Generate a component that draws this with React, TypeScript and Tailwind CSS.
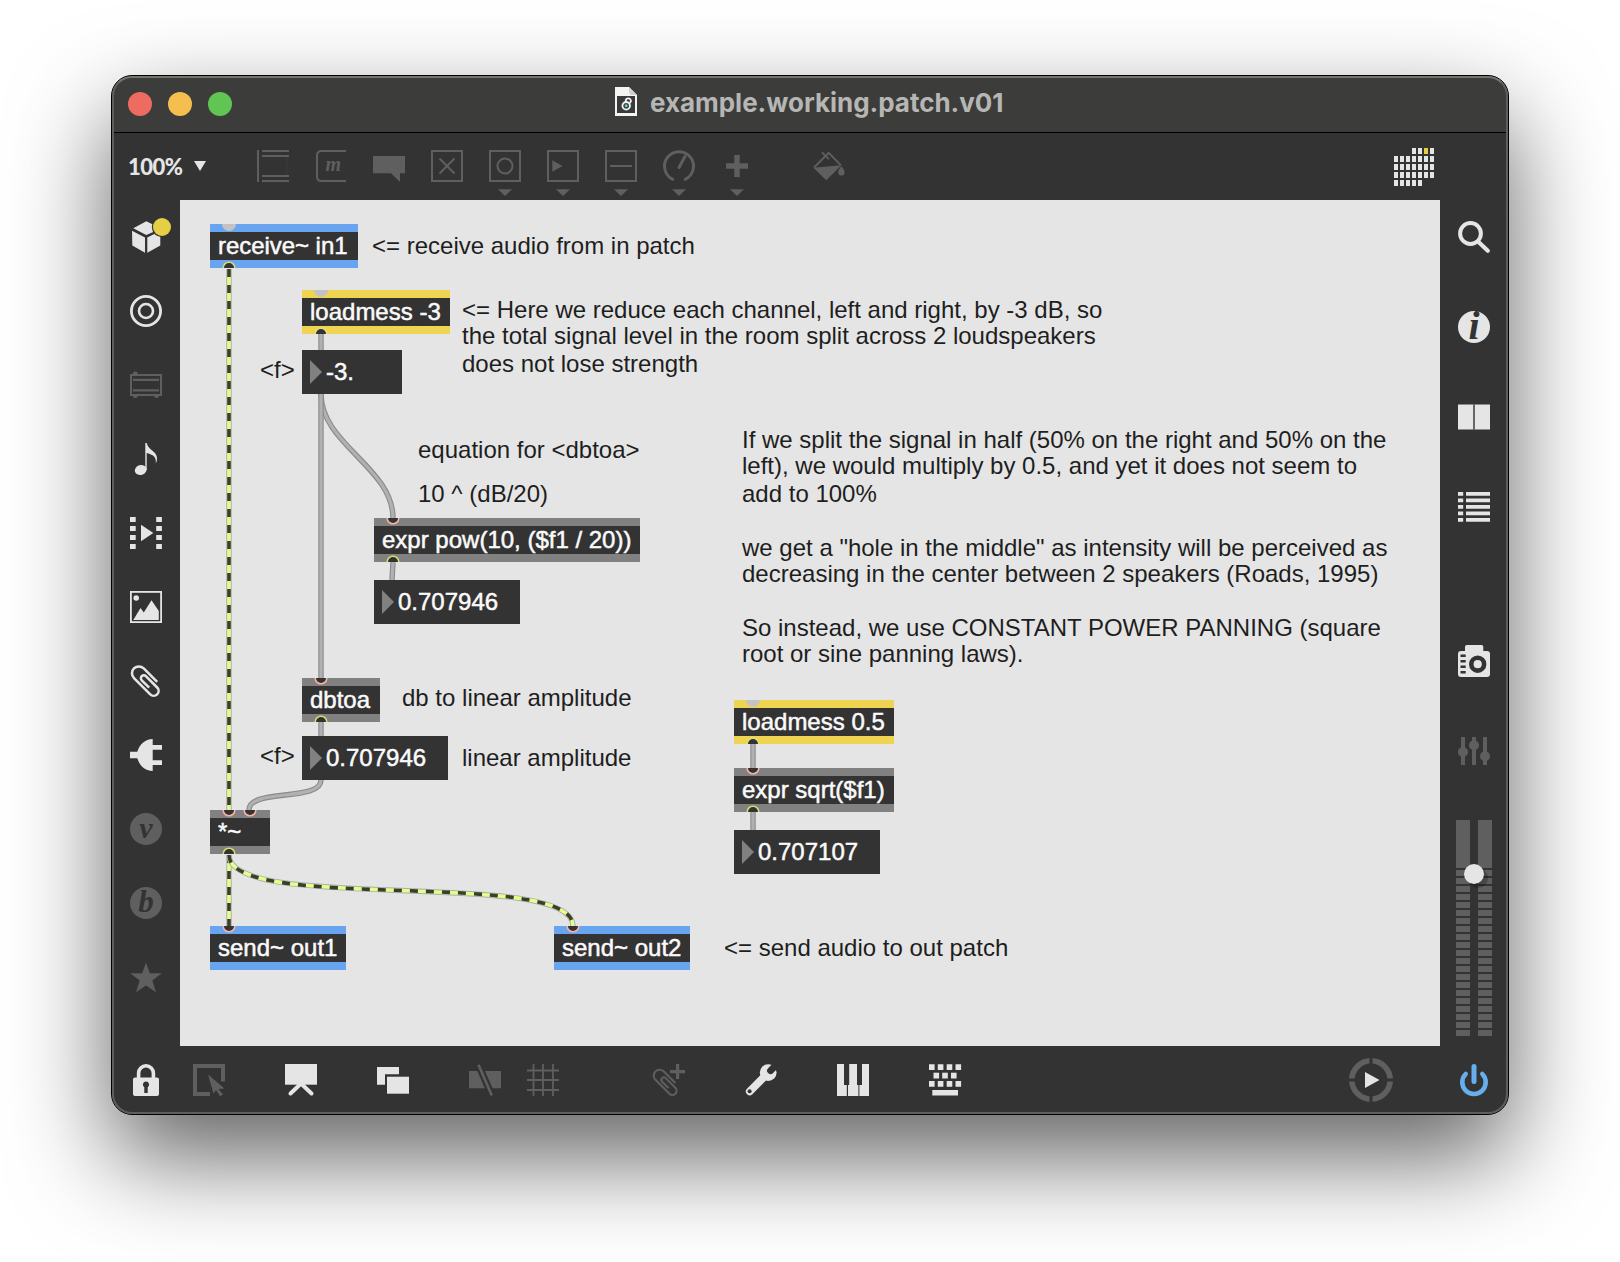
import React from "react";

const LIGHT = "#e5e5e5";
const DIM = "#5f5f5f";
const BG = "#333333";

type IconProps = { children: React.ReactNode; className?: string };

function Icon({ children, className = "" }: IconProps) {
  return (
    <svg viewBox="0 0 32 32" className={"block size-8 shrink-0 overflow-visible " + className} fill="currentColor">
      {children}
    </svg>
  );
}

function ClipShape({ width = 2.5 }: { width?: number }) {
  return (
    <path
      d="M8.5-7.3H-10.5a6.9 6.9 0 0 0 0 13.8H12.500a4.900 4.900 0 0 0 0-9.800H-3.500a2.900 2.900 0 0 0 0 5.800H7"
      transform="translate(16 16) rotate(45)"
      fill="none"
      stroke="currentColor"
      strokeWidth={width}
    />
  );
}

/* ---------- top toolbar ---------- */

function ToolIcon({ children, menu }: { children: React.ReactNode; menu?: boolean }) {
  return (
    <svg viewBox="0 0 32 48" className="block h-12 w-8 shrink-0 overflow-visible text-[#5f5f5f]" fill="currentColor">
      {children}
      {menu && <path d="M9 39.300h14l-7 6.700z" />}
    </svg>
  );
}

const frame = <rect x="1" y="1" width="30" height="30" fill="none" stroke="currentColor" strokeWidth="2" />;

function LevelGrid() {
  const cells: React.ReactNode[] = [];
  for (let r = 0; r < 5; r++) {
    for (let c = 0; c < 7; c++) {
      if ((r === 0 && c < 3) || (r === 4 && c > 4)) continue;
      cells.push(
        <rect key={r + "-" + c} x={c * 6} y={r * 8} width="4" height="6" fill={r === 0 && c === 5 ? "#e6cf45" : LIGHT} />
      );
    }
  }
  return (
    <svg viewBox="0 0 40 38" className="block h-[38px] w-10 shrink-0">
      {cells}
    </svg>
  );
}

function Toolbar() {
  return (
    <div className="flex h-[67px] items-start pt-[17px]">
      <div className="ml-[16px] flex h-8 w-[129px] items-center">
        <span className="w-[66px] pt-px font-[family-name:Lato] text-[22px] leading-8 font-black tracking-[-0.500px] text-[#e5e5e5]">
          100%
        </span>
        <svg viewBox="0 0 12 10" className="block h-[10px] w-3" fill={LIGHT}>
          <path d="M0 0h12L6 10z" />
        </svg>
      </div>
      <div className="flex gap-[26px]">
        <ToolIcon>
          <path d="M0 0h2v32H0zM5 0h27v2H5zM5 5h27v2H5zM5 25h27v2H5zM5 30h27v2H5z" />
          <rect x="29.500" y="7" width="1" height="18" fill="#3d3d3d" />
        </ToolIcon>
        <ToolIcon>
          <path d="M31 1H6.500q-4.500 0-4.500 4.500v21q0 4.500 4.500 4.500H31" fill="none" stroke="currentColor" strokeWidth="2" />
          <text x="18.300" y="21" textAnchor="middle" className="font-['Liberation_Serif'] text-[20px] font-bold italic">
            m
          </text>
        </ToolIcon>
        <ToolIcon>
          <path d="M0 6h32v17.300h-5V32l-9-8.700H0z" />
        </ToolIcon>
        <ToolIcon>
          {frame}
          <path d="M8.500 8.500l15 15M23.500 8.500l-15 15" stroke="currentColor" strokeWidth="2" />
        </ToolIcon>
        <ToolIcon menu>
          {frame}
          <circle cx="16" cy="16" r="7.500" fill="none" stroke="currentColor" strokeWidth="2" />
        </ToolIcon>
        <ToolIcon menu>
          {frame}
          <path d="M5.300 10.300L15.500 16 5.300 21.700z" />
        </ToolIcon>
        <ToolIcon menu>
          {frame}
          <path d="M5 15h22v2H5z" />
        </ToolIcon>
        <ToolIcon menu>
          <path d="M9.800 29.300a14.500 14.500 0 1 1 12.400 0" fill="none" stroke="currentColor" strokeWidth="3" strokeLinecap="round" />
          <path d="M16 17.500L22 6.500" stroke="currentColor" strokeWidth="3" strokeLinecap="round" />
        </ToolIcon>
        <ToolIcon menu>
          <path d="M13.300 5h5.400v8.300h8.300v5.400h-8.300V27h-5.400v-8.300H5v-5.400h8.300z" />
        </ToolIcon>
      </div>
      <div className="ml-[60px]">
        <ToolIcon>
          <path d="M1 17.500L15.700 2.800 28 15.300" fill="none" stroke="currentColor" strokeWidth="1.900" />
          <path d="M.3 17.700L28.500 15.300 13.300 30.300z" />
          <path d="M9 2.300l6.800 6.800" stroke="currentColor" strokeWidth="1.900" />
          <path d="M28.300 15.500c1.800 2.500 3.700 4.500 3.700 7a3.600 3.600 0 0 1-7.200 0c0-2.500 1.900-4.500 3.500-7z" stroke={BG} strokeWidth=".8" />
        </ToolIcon>
      </div>
      <div className="-mt-[2px] ml-[549px]">
        <LevelGrid />
      </div>
    </div>
  );
}

/* ---------- side bars ---------- */

function LetterDisc({ letter, className }: { letter: string; className: string }) {
  return (
    <div
      className={
        "flex size-8 shrink-0 items-center justify-center rounded-full font-['Liberation_Serif'] font-bold italic text-[#333333] " +
        className
      }
    >
      {letter}
    </div>
  );
}

function LeftBar() {
  const icons = [
    <Icon className="text-[#e5e5e5]">
      <path d="M16.300.3L28.500 6.300 29.500 8.300 16.300 14 3.300 7.200z" />
      <path d="M2 9.700l13 6.800v15.300L2.300 24.500zM17.300 16.500L30.300 10v14.500l-13 7.300z" />
      <circle cx="32" cy="6" r="10.200" fill={BG} />
      <circle cx="32" cy="6" r="9" fill="#e6cf45" />
    </Icon>,
    <Icon className="text-[#e5e5e5]">
      <circle cx="16" cy="16" r="14.600" fill="none" stroke="currentColor" strokeWidth="2.800" />
      <circle cx="16" cy="16" r="7" fill="none" stroke="currentColor" strokeWidth="2.600" />
    </Icon>,
    <Icon className="text-[#5f5f5f]">
      <rect x="1" y="6" width="30" height="20" fill="none" stroke="currentColor" strokeWidth="2" />
      <path d="M3 9.800h26v2.200H3zM3 20.200h26v2.200H3z" />
      <path d="M2.800 5a2.500 2.500 0 0 1 5 0zM2.800 26.500a2.500 2.500 0 0 0 5 0zM24 26.500a2.500 2.500 0 0 0 5 0z" />
    </Icon>,
    <Icon className="text-[#e5e5e5]">
      <ellipse cx="10.700" cy="27" rx="6" ry="4.900" transform="rotate(-18 10.700 27)" />
      <path d="M15.300 0h1.400c1 4 3.500 6 6.300 8.300 4 3.300 5.300 7.200 2.800 12.200 .6-6-1.600-8.500-9.100-10.500V27h-1.400z" />
    </Icon>,
    <Icon className="text-[#e5e5e5]">
      <path d="M0 0h5.700v5H0zM0 9h5.700v5H0zM0 18h5.700v5H0zM0 27h5.700v5H0zM26.200 0h5.700v5h-5.700zM26.200 9h5.700v5h-5.700zM26.200 18h5.700v5h-5.700zM26.200 27h5.700v5h-5.700zM11 7.700L23.300 16 11 24.300z" />
    </Icon>,
    <Icon className="text-[#e5e5e5]">
      <rect x=".9" y=".9" width="30.200" height="30.200" fill="none" stroke="currentColor" strokeWidth="1.800" />
      <circle cx="6.200" cy="7" r="2.800" />
      <path d="M3.300 29L10.500 17l3.300 4.500L21.500 9.300 28.800 20v9z" />
    </Icon>,
    <Icon className="text-[#e5e5e5]">
      <ClipShape />
    </Icon>,
    <Icon className="text-[#e5e5e5]">
      <path d="M22.700 0v6H32v4.700h-9.300v10.600H32V26h-9.300v6C15 32 9.500 26.500 7.300 19.200H0v-6.400h7.300C9.500 5.500 15 0 22.700 0z" />
    </Icon>,
    <LetterDisc letter="v" className="bg-[#5f5f5f] pb-[3px] text-[30px]" />,
    <LetterDisc letter="b" className="bg-[#5f5f5f] pb-[1px] text-[31px]" />,
    <Icon className="text-[#5f5f5f]">
      <path d="M16 1.500l3.800 10.800h12l-9.500 7.200L26 31.300l-10-6.900-10 6.900 3.700-11.800L.2 12.300h12z" />
    </Icon>,
  ];
  return (
    <div className="flex w-[68px] flex-col">
      {icons.map((icon, i) => (
        <div key={i} className="flex h-[74px] items-center justify-center">
          {icon}
        </div>
      ))}
    </div>
  );
}

function Meter() {
  const segments = Array.from({ length: 21 }, (_, i) => i);
  return (
    <div className="relative mt-[53px] flex gap-2">
      {[0, 1].map((ch) => (
        <div key={ch} className="flex w-[14px] flex-col gap-[2px]">
          <div className="h-12 bg-[#5f5f5f]" />
          {segments.map((s) => (
            <div key={s} className="h-[6px] bg-[#5f5f5f]" />
          ))}
        </div>
      ))}
      <div className="absolute top-[44px] left-[8px] size-5 rounded-full bg-[#e5e5e5] shadow-[4px_4px_1px_rgba(0,0,0,0.25)]" />
    </div>
  );
}

function RightBar() {
  return (
    <div className="flex w-[68px] flex-col items-center pt-[21px]">
      <div className="flex flex-col gap-[58px]">
        <Icon className="text-[#e5e5e5]">
          <circle cx="12.500" cy="12.500" r="10.400" fill="none" stroke="currentColor" strokeWidth="4" />
          <path d="M20 20.500l9.800 9.300" stroke="currentColor" strokeWidth="4.200" strokeLinecap="round" />
        </Icon>
        <LetterDisc letter="i" className="bg-[#e5e5e5] pb-[2px] text-[40px]" />
        <Icon className="text-[#e5e5e5]">
          <rect x="0" y="3" width="32" height="26" fill="#8a8a8a" />
          <path d="M0 4h15v24H0zM17 4h15v24H17z" />
          <path d="M15 3h2v26h-2z" fill="#666666" />
        </Icon>
        <Icon className="text-[#e5e5e5]">
          {[1, 7.5, 14, 20.5, 27].map((y) => (
            <path key={y} d={`M0 ${y}h5.200v3.700H0zM8 ${y}h24v3.700H8z`} />
          ))}
        </Icon>
      </div>
      <div className="mt-[122px] flex flex-col gap-[58px]">
        <Icon className="text-[#e5e5e5]">
          <path d="M9 0h14.500q1.800 0 1.800 1.800V6H29q3 0 3 3v20q0 3-3 3H3q-3 0-3-3V9q0-3 3-3h4V1.800Q7 0 9 0z" />
          <path d="M2.500 9.400h5.200v2.600H2.500zM2.500 14.900h5.200v2.600H2.500zM2.500 20.400h5.200v2.600H2.500zM2.500 26h5.200v2.600H2.500z" fill={BG} />
          <circle cx="19.700" cy="19.200" r="6.400" fill="none" stroke={BG} strokeWidth="4.600" />
        </Icon>
        <Icon className="text-[#5f5f5f]">
          <path d="M3 2h4v28H3zM14 2h4v28h-4zM25 2h4v28h-4z" />
          <circle cx="5" cy="17" r="5" />
          <circle cx="16" cy="10.300" r="5" />
          <circle cx="27" cy="21.300" r="5" />
        </Icon>
      </div>
      <Meter />
    </div>
  );
}

/* ---------- bottom bar ---------- */

function BottomBar() {
  return (
    <div className="flex h-[68px] items-center pl-[18px]">
      <Icon className="text-[#e5e5e5]">
        <path d="M8.600 15V9.200a7.400 7.400 0 0 1 14.800 0V15" fill="none" stroke="currentColor" strokeWidth="3.600" />
        <rect x="3" y="13.500" width="26" height="18.500" rx="2" />
        <path d="M16 17.500a3.100 3.100 0 0 1 1.700 5.700V29h-3.400v-5.800A3.100 3.100 0 0 1 16 17.500z" fill={BG} />
      </Icon>
      <Icon className="ml-[31px] text-[#5f5f5f]">
        <path d="M30 17.500V2H2v28h15" fill="none" stroke="currentColor" strokeWidth="4" />
        <path d="M15 10.500L31.500 24.500l-6.200.6 4.700 5.200-3 2-4-6.300-2.500 3.500z" />
      </Icon>
      <Icon className="ml-[60px] text-[#e5e5e5]">
        <path d="M0 0h32v20.700H0z" />
        <path d="M5.500 29.500L16 19.500l10.500 10" fill="none" stroke="currentColor" strokeWidth="4" strokeLinecap="round" />
      </Icon>
      <Icon className="ml-[60px] text-[#e5e5e5]">
        <path d="M0 3h22v7.300H8v10.400H0z" />
        <path d="M10 12.700h22v17H10z" />
      </Icon>
      <Icon className="ml-[60px] text-[#5f5f5f]">
        <path d="M0 7h32v17.300H0z" />
        <path d="M9.500.8L22.800 31.500" stroke={BG} strokeWidth="7" />
        <path d="M9.500.8L22.800 31.500" stroke="currentColor" strokeWidth="2.600" />
      </Icon>
      <Icon className="ml-[26px] text-[#5f5f5f]">
        <path d="M6.500 0v32M16 0v32M26 0v32M0 6.500h32M0 16h32M0 26h32" stroke="currentColor" strokeWidth="1.800" />
      </Icon>
      <Icon className="ml-[94px] text-[#5f5f5f]">
        <g transform="translate(-1 4.500) scale(.86)">
          <ClipShape width={2.4} />
        </g>
        <path d="M23 0h3.200v6H32v3.200h-5.800V15H23V9.200h-6V6h6z" />
      </Icon>
      <Icon className="ml-[60px] text-[#e5e5e5]">
        <circle cx="23.200" cy="8.600" r="8.400" />
        <path d="M4.700 27.500L20 12" stroke="currentColor" strokeWidth="7.600" strokeLinecap="round" />
        <path d="M25.600 6.600L34-2" stroke={BG} strokeWidth="7" strokeLinecap="round" />
        <circle cx="4.600" cy="27.300" r="2" fill={BG} />
      </Icon>
      <Icon className="ml-[60px] text-[#e5e5e5]">
        <path d="M0 0h7v21h2.800v11H0zM12.200 0H20v21h1.400v11H11V21h1.200zM25 0h7v32h-9.600V21H25z" />
      </Icon>
      <Icon className="ml-[60px] text-[#e5e5e5]">
        {[0, 8.800, 17.700, 26.500].map((x) => (
          <path key={x} d={`M${x} .3h5.600v5.800h-5.600zM${x} 17h5.600v5.800h-5.600z`} />
        ))}
        {[4.500, 13.200, 22].map((x) => (
          <path key={x} d={`M${x} 8.700h5.600v5.800h-5.600z`} />
        ))}
        <path d="M3.300 26H29v5.500H3.300z" />
      </Icon>
      <svg viewBox="-22 -22 44 44" className="ml-[388px] block size-11 shrink-0">
        <circle r="19.200" fill="none" stroke={DIM} strokeWidth="5.600" />
        <path d="M-22 0h44M0-22v44" stroke={BG} strokeWidth="3" />
        <path d="M-6-8L8.500 0-6 8z" fill={LIGHT} />
      </svg>
      <Icon className="ml-[65px] text-[#66aeee]">
        <path d="M16 2.600v15" stroke="currentColor" strokeWidth="5" strokeLinecap="round" />
        <path d="M7.700 10a11.700 11.700 0 1 0 16.600 0" fill="none" stroke="currentColor" strokeWidth="4.600" strokeLinecap="round" />
      </Icon>
    </div>
  );
}

/* ---------- patcher canvas ---------- */

function Inlet({ x, hot }: { x: number; hot?: boolean }) {
  return hot ? (
    <circle cx={x} cy="0" r="7" fill="#c3c3c3" />
  ) : (
    <circle cx={x} cy="0" r="5.800" fill={BG} stroke="#f7b3a5" strokeWidth="1.600" />
  );
}

type NodeProps = {
  text: string;
  place: string;
  bar: string;
  inlets?: number[];
  plainInlet?: boolean;
  outlet?: string;
  spacing?: string;
};

function PatchObject({ text, place, bar, inlets = [19], plainInlet, outlet, spacing = "" }: NodeProps) {
  return (
    <div className={"absolute flex h-11 flex-col bg-[#333333] " + place}>
      <div className={"h-2 shrink-0 " + bar}>
        <svg className="block h-2 w-full">
          {inlets.map((x) => (
            <Inlet key={x} x={x} hot={plainInlet} />
          ))}
        </svg>
      </div>
      <div
        className={
          "h-7 pl-2 text-[24px] leading-7 whitespace-nowrap text-[#fafafa] [-webkit-text-stroke:0.5px_#fafafa] " + spacing
        }
      >
        {text}
      </div>
      <div className={"h-2 shrink-0 " + bar}>
        {outlet && (
          <svg className="block h-2 w-full">
            <circle cx="19" cy="8" r="5.800" fill={BG} stroke={outlet} strokeWidth="1.600" />
          </svg>
        )}
      </div>
    </div>
  );
}

function NumberBox({ value, place }: { value: string; place: string }) {
  return (
    <div className={"absolute flex h-11 items-center bg-[#333333] pl-2 " + place}>
      <svg viewBox="0 0 12 24" className="block h-6 w-3" fill="#818181">
        <path d="M0 0l12 12L0 24z" />
      </svg>
      <span className="ml-[4px] text-[24px] leading-[44px] whitespace-nowrap text-[#fafafa] [-webkit-text-stroke:0.5px_#fafafa]">
        {value}
      </span>
    </div>
  );
}

const ROWS = [
  "h-[26px]",
  "h-[28px]",
  "h-[26px]",
  "h-[28px]",
  "h-[26px]",
  "h-[26px]",
  "h-[28px]",
  "h-[26px]",
  "h-[28px]",
];

function Comment({ lines, place }: { lines: string[]; place: string }) {
  return (
    <div className={"absolute text-[24px] leading-[27px] whitespace-nowrap text-[#1e1e1e] " + place}>
      {lines.map((line, i) => (
        <div key={i} className={ROWS[i]}>
          {line}
        </div>
      ))}
    </div>
  );
}

const controlCables = [
  "M321 334V350",
  "M321 394C321 444 393 468 393 518",
  "M321 394V678",
  "M393 562L392 580",
  "M321 722V736",
  "M321 780C321 802 249 788 249 810",
  "M753 744V768",
  "M753 812V830",
];

const signalCables = ["M229 269V810", "M229 855V926", "M229 855C229 914 573 867 573 926"];

function Cables() {
  return (
    <svg viewBox="180 200 1260 846" className="absolute inset-0 block h-[846px] w-[1260px]" fill="none">
      {controlCables.map((d) => (
        <g key={d}>
          <path d={d} stroke="#8a8a8a" strokeWidth="5.400" />
          <path d={d} stroke="#b1b1b1" strokeWidth="3.200" />
        </g>
      ))}
      {signalCables.map((d) => (
        <g key={d}>
          <path d={d} stroke="#acacac" strokeWidth="5.400" />
          <path d={d} stroke="#e1ff8c" strokeWidth="3.600" />
          <path d={d} stroke="#3b3e28" strokeWidth="3.600" strokeDasharray="8 8" />
        </g>
      ))}
    </svg>
  );
}

const GRAY = "bg-[#818181]";
const BLUE = "bg-[#68a4f0]";
const YELLOW = "bg-[#efd452]";
const OUT = "#d5de6e";

function Canvas() {
  return (
    <div className="relative h-[846px] w-[1260px] overflow-hidden bg-[#e5e5e5] font-['Liberation_Sans',Arial,sans-serif]">
      <Cables />
      <PatchObject text="receive~ in1" bar={BLUE} plainInlet outlet={OUT} spacing="tracking-[-0.050px]" place="left-[30px] top-[24px] w-[148px]" />
      <PatchObject text="loadmess -3" bar={YELLOW} plainInlet outlet="#dfe07a" place="left-[122px] top-[90px] w-[148px]" />
      <NumberBox value="-3." place="left-[122px] top-[150px] w-[100px]" />
      <PatchObject text="expr pow(10, ($f1 / 20))" bar={GRAY} outlet={OUT} place="left-[194px] top-[318px] w-[266px]" />
      <NumberBox value="0.707946" place="left-[194px] top-[380px] w-[146px]" />
      <PatchObject text="dbtoa" bar={GRAY} outlet={OUT} place="left-[122px] top-[478px] w-[78px]" />
      <NumberBox value="0.707946" place="left-[122px] top-[536px] w-[146px]" />
      <PatchObject text="*~" bar={GRAY} inlets={[19, 40]} outlet={OUT} place="left-[30px] top-[610px] w-[60px]" />
      <PatchObject text="send~ out1" bar={BLUE} place="left-[30px] top-[726px] w-[136px]" />
      <PatchObject text="send~ out2" bar={BLUE} place="left-[374px] top-[726px] w-[136px]" />
      <PatchObject text="loadmess 0.5" bar={YELLOW} plainInlet outlet="#dfe07a" place="left-[554px] top-[500px] w-[160px]" />
      <PatchObject text="expr sqrt($f1)" bar={GRAY} outlet={OUT} place="left-[554px] top-[568px] w-[160px]" />
      <NumberBox value="0.707107" place="left-[554px] top-[630px] w-[146px]" />

      <Comment lines={["<= receive audio from in patch"]} place="left-[192px] top-[32px]" />
      <Comment
        lines={[
          "<= Here we reduce each channel, left and right, by -3 dB, so",
          "the total signal level in the room split across 2 loudspeakers",
          "does not lose strength",
        ]}
        place="left-[282px] top-[96px]"
      />
      <Comment lines={["<f>"]} place="left-[80px] top-[156px]" />
      <Comment lines={["equation for <dbtoa>"]} place="left-[238px] top-[236px]" />
      <Comment lines={["10 ^ (dB/20)"]} place="left-[238px] top-[280px]" />
      <Comment lines={["db to linear amplitude"]} place="left-[222px] top-[484px]" />
      <Comment lines={["<f>"]} place="left-[80px] top-[542px]" />
      <Comment lines={["linear amplitude"]} place="left-[282px] top-[544px]" />
      <Comment lines={["<= send audio to out patch"]} place="left-[544px] top-[734px]" />
      <Comment
        lines={[
          "If we split the signal in half (50% on the right and 50% on the",
          "left), we would multiply by 0.5, and yet it does not seem to",
          "add to 100%",
          "",
          'we get a "hole in the middle" as intensity will be perceived as',
          "decreasing in the center between 2 speakers (Roads, 1995)",
          "",
          "So instead, we use CONSTANT POWER PANNING (square",
          "root or sine panning laws).",
        ]}
        place="left-[562px] top-[226px]"
      />
    </div>
  );
}

/* ---------- window ---------- */

function TitleBar() {
  return (
    <div className="flex h-14 items-center bg-[#3c3c3a]">
      <div className="ml-[16px] flex gap-4">
        <div className="size-6 rounded-full bg-[#ed6b60]" />
        <div className="size-6 rounded-full bg-[#f5bf4f]" />
        <div className="size-6 rounded-full bg-[#61c554]" />
      </div>
      <svg viewBox="0 0 22 29" className="-mt-[5px] ml-[383px] block h-[29px] w-[22px]">
        <path d="M0 0h14l8 8v21H0z" fill="#f4f4f4" />
        <path d="M14 0l8 8h-6.500L14 5z" fill="#d0d0d0" />
        <path d="M2 9h18v17H2z" fill="#3a3a3a" />
        <circle cx="11.200" cy="18.800" r="3.800" fill="#35514d" stroke="#f4f4f4" strokeWidth="1.800" />
        <path d="M11 14.800a2.500 2.500 0 1 1 3.600 1.200" fill="none" stroke="#f4f4f4" strokeWidth="1.700" />
        <circle cx="11.200" cy="18.800" r="1.200" fill="#7fe0c0" />
      </svg>
      <span className="-mt-[2px] ml-[13px] font-['Inter'] text-[26px] leading-8 font-bold tracking-[-0.020px] text-[#b6b6b4]">
        example.working.patch.v01
      </span>
    </div>
  );
}

export default function App() {
  return (
    <div className="h-[1262px] w-[1620px] overflow-hidden bg-white pt-[75px] pl-[111px]">
      <div className="relative h-[1040px] w-[1398px] overflow-visible rounded-[21px] shadow-[0_42px_98px_rgba(0,0,0,0.62)]">
        <div className="flex h-full w-full flex-col overflow-hidden rounded-[21px] border border-black bg-[#333333]">
          <TitleBar />
          <div className="h-px bg-black" />
          <Toolbar />
          <div className="flex">
            <LeftBar />
            <Canvas />
            <RightBar />
          </div>
          <BottomBar />
        </div>
        <div className="pointer-events-none absolute inset-px rounded-[20px] border-2 border-[#5e5e5e] border-t-[#74746f]" />
      </div>
    </div>
  );
}
